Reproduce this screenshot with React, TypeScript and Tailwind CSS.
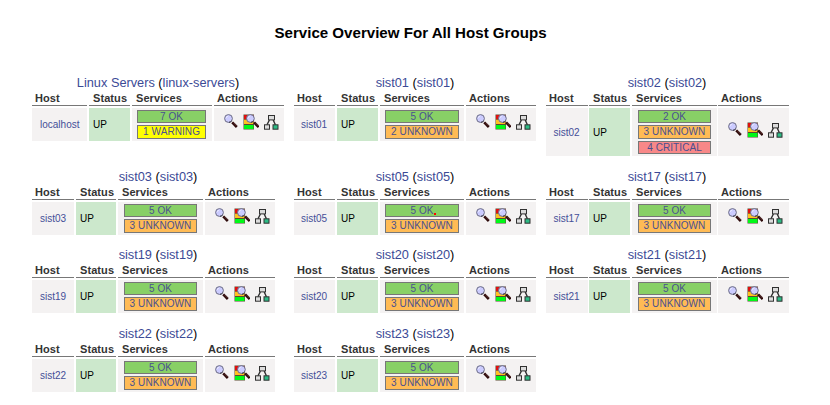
import React from "react";

type Kind = "ok" | "warning" | "unknown" | "critical";
type Service = { kind: Kind; label: string; cursor?: boolean };
type Shape = "wide" | "mid" | "right" | "left";
type Group = { title: string; name: string; shape: Shape; services: Service[] };

const ok = (n: number, cursor = false): Service => ({ kind: "ok", label: `${n} OK`, cursor });
const unknown = (n: number): Service => ({ kind: "unknown", label: `${n} UNKNOWN` });
const host = (name: string, shape: Shape, services: Service[]): Group => ({ title: name, name, shape, services });

const rows: { height: string; groups: Group[] }[] = [
  {
    height: "h-[94px]",
    groups: [
      {
        title: "Linux Servers",
        name: "linux-servers",
        shape: "wide",
        services: [ok(7), { kind: "warning", label: "1 WARNING" }],
      },
      host("sist01", "mid", [ok(5), unknown(2)]),
      host("sist02", "right", [ok(2), unknown(3), { kind: "critical", label: "4 CRITICAL" }]),
    ],
  },
  {
    height: "h-[78px]",
    groups: [
      host("sist03", "left", [ok(5), unknown(3)]),
      host("sist05", "mid", [ok(5, true), unknown(3)]),
      host("sist17", "right", [ok(5), unknown(3)]),
    ],
  },
  {
    height: "h-[79px]",
    groups: [
      host("sist19", "left", [ok(5), unknown(3)]),
      host("sist20", "mid", [ok(5), unknown(3)]),
      host("sist21", "right", [ok(5), unknown(3)]),
    ],
  },
  {
    height: "h-[79px]",
    groups: [host("sist22", "left", [ok(5), unknown(3)]), host("sist23", "mid", [ok(5), unknown(3)])],
  },
];

const columns: Record<Shape, string> = {
  wide: "grid-cols-[55px_2px_41px_2px_80px_2px_70px]",
  mid: "grid-cols-[41px_2px_41px_2px_84px_2px_70px]",
  right: "grid-cols-[42px_1px_41px_2px_85px_1px_71px]",
  left: "grid-cols-[42px_2px_40px_2px_85px_2px_70px]",
};

const badgePadding: Record<Shape, string> = {
  wide: "pl-[5px] pr-[6px]",
  mid: "px-[5px]",
  right: "px-[6px]",
  left: "px-[6px]",
};

const linkPadding: Record<Shape, string> = { wide: "pl-2", mid: "pl-[7px]", right: "pl-[7.5px]", left: "pl-2" };

const badgeColor: Record<Kind, string> = {
  ok: "bg-[#88d066]",
  warning: "bg-[#ffff00]",
  unknown: "bg-[#ffbb55]",
  critical: "bg-[#f88888]",
};

function Magnifier() {
  return (
    <>
      <path d="M8.2 8.4 L12.8 13" stroke="#2b0808" strokeWidth="2.6" />
      <path d="M9.4 8.8 L12.6 12" stroke="#7b4a4a" strokeWidth=".7" />
      <circle cx="4.5" cy="4.5" r="3.9" fill="#ccccff" stroke="#6c6c84" strokeWidth="1" />
      <path d="M7.6 7 A4 4 0 0 1 5 8.4" fill="none" stroke="#333344" strokeWidth="1" />
      <path d="M2.2 3.9 A2.6 2.6 0 0 1 4 2.1" fill="none" stroke="#f4f4ff" strokeWidth=".8" />
    </>
  );
}

function HostIcon() {
  return (
    <svg className="h-4 w-[14px]" viewBox="0 0 14 16">
      <Magnifier />
    </svg>
  );
}

function StatusIcon() {
  return (
    <svg className="h-4 w-4" viewBox="0 0 16 16">
      <rect x=".5" y=".5" width="10.5" height="15" fill="#5a4a30" />
      <rect x="1" y="1" width="9.5" height="4.2" fill="#e01010" />
      <rect x="1" y="5.7" width="9.5" height="4.3" fill="#ffc020" />
      <rect x="1" y="11" width="9.5" height="4" fill="#00f818" />
      <g transform="translate(2.9 0)">
        <Magnifier />
      </g>
    </svg>
  );
}

function TreeIcon() {
  return (
    <svg className="h-4 w-4" viewBox="0 0 16 16" fill="none" stroke="#303030" strokeWidth="1">
      <path d="M6.4 6 L4 10.8 M10.2 6 L12.4 10.8" strokeWidth="1.4" />
      <rect x="5.5" y="1.5" width="6" height="4.4" fill="#dcdcdc" />
      <rect x="1.5" y="10.8" width="5" height="4.4" fill="#dcdcdc" />
      <rect x="10" y="10.8" width="5" height="4.4" fill="#2dbb85" />
    </svg>
  );
}

function Heading({ children, pad }: { children: string; pad: string }) {
  return (
    <div
      className={`h-[14px] border-b border-[#777] text-[11px] leading-[13px] font-bold tracking-[0.08px] whitespace-nowrap text-[#333] ${pad}`}
    >
      {children}
    </div>
  );
}

function HostGroup({ group }: { group: Group }) {
  const { shape, services, title, name } = group;
  const cell = "flex items-center bg-[#f4f2f2]";
  return (
    <section className={shape === "wide" || shape === "left" ? "w-[252px]" : "w-[242px]"}>
      <h2 className="h-[18px] text-center text-[12.75px] leading-[18px] text-black">
        <a className="text-[#3b4a96]">{title}</a> (<a className="text-[#3b4a96]">{name}</a>)
      </h2>
      <div className={`grid gap-y-[2px] ${columns[shape]}`}>
        <Heading pad="pl-[3px]">Host</Heading>
        <i />
        <Heading pad="pl-1">Status</Heading>
        <i />
        <Heading pad="pl-1">Services</Heading>
        <i />
        <Heading pad="pl-[3px]">Actions</Heading>

        <div className={`${cell} text-[10px] text-[#444f98] ${linkPadding[shape]}`}>
          {shape === "wide" ? "localhost" : name}
        </div>
        <i />
        <div className="flex items-center bg-[#cce8cc] pl-1 text-[10px] text-black">UP</div>
        <i />
        <div className={`flex flex-col gap-[2px] bg-[#f4f2f2] pt-[2px] pb-[2px] ${badgePadding[shape]}`}>
          {services.map((s, i) => (
            <div
              key={s.label}
              className={`relative border border-[#777] text-center text-[10px] tracking-[0.08px] whitespace-nowrap text-[#4a5090] ${
                i === 1 ? "h-[14px] leading-3" : "h-[13px] leading-[12px]"
              } ${badgeColor[s.kind]}`}
            >
              {s.label}
              {s.cursor && <span className="absolute top-[8px] left-[48px] h-[2px] w-[2px] bg-[#ff0000]" />}
            </div>
          ))}
        </div>
        <i />
        <div className={`${cell} pl-[10px]`}>
          <div className="flex h-[21px] items-start gap-[4.5px]">
            <HostIcon />
            <StatusIcon />
            <TreeIcon />
          </div>
        </div>
      </div>
    </section>
  );
}

export default function App() {
  return (
    <main className="h-[405px] w-[830px] overflow-hidden bg-white font-['Liberation_Sans',Arial,sans-serif]">
      <h1 className="h-[74px] w-[821px] pt-[23px] text-center text-[15.1px] leading-5 font-bold text-black">
        Service Overview For All Host Groups
      </h1>
      {rows.map((row, i) => (
        <div key={i} className={`flex gap-[10px] pl-8 ${row.height}`}>
          {row.groups.map((g) => (
            <HostGroup key={g.name} group={g} />
          ))}
        </div>
      ))}
    </main>
  );
}
